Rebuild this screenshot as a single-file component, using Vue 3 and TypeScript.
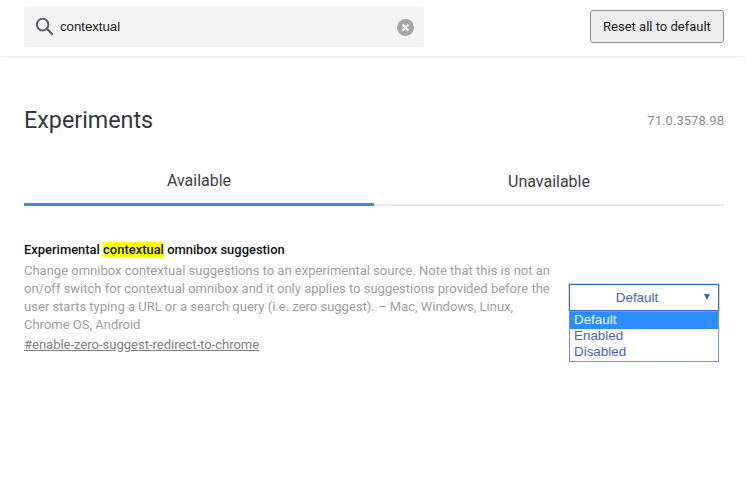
<script setup lang="ts">
const options: string[] = ['Default', 'Enabled', 'Disabled']
</script>

<template>
  <div class="page">
    <header class="top">
      <div class="search">
        <svg class="mag" width="20" height="20" viewBox="0 0 20 20" fill="none" stroke="#5f6368">
          <circle cx="7.6" cy="7.6" r="5.8" stroke-width="2" />
          <path d="M11.8 11.8 L17.8 17.8" stroke-width="2.2" />
        </svg>
        <span class="query">contextual</span>
        <svg class="clear" width="17" height="17" viewBox="0 0 17 17">
          <circle cx="8.5" cy="8.5" r="8.5" fill="#a6a6a6" />
          <path d="M5.5 5.5 L11.5 11.5 M11.5 5.5 L5.5 11.5" stroke="#f3f3f3" stroke-width="2.2" />
        </svg>
      </div>
      <button class="reset">Reset all to default</button>
    </header>

    <main class="body">
      <div class="title-row">
        <h1>Experiments</h1>
        <span class="version">71.0.3578.98</span>
      </div>

      <div class="tabs">
        <div class="tab active">Available</div>
        <div class="tab">Unavailable</div>
      </div>

      <section class="experiment">
        <div class="info">
          <h2>Experimental <mark>contextual</mark> omnibox suggestion</h2>
          <p>Change omnibox contextual suggestions to an experimental source. Note that this is not an on/off switch for contextual omnibox and it only applies to suggestions provided before the user starts typing a URL or a search query (i.e. zero suggest). – Mac, Windows, Linux, Chrome OS, Android</p>
          <a class="link">#enable-zero-suggest-redirect-to-chrome</a>
        </div>
        <div class="select-wrap">
          <div class="select">
            <span>Default</span>
            <i class="arrow"></i>
          </div>
          <ul class="menu">
            <li v-for="(o, i) in options" :key="o" :class="{ sel: i === 0 }">{{ o }}</li>
          </ul>
        </div>
      </section>
    </main>
  </div>
</template>

<style>
html, body { margin: 0; background: #fff; }
</style>

<style scoped>
.page {
  width: 745px;
  height: 481px;
  overflow: hidden;
  font-family: Roboto, "Liberation Sans", sans-serif;
  background: #fff;
}
.top {
  height: 57px;
  box-sizing: border-box;
  padding: 6px 21px 0 24px;
  display: flex;
  justify-content: space-between;
  align-items: flex-start;
  border-bottom: 1px solid #ededed;
  box-shadow: 0 1px 2px rgba(0, 0, 0, 0.05);
}
.search {
  width: 400px;
  height: 41px;
  box-sizing: border-box;
  background: #f4f4f4;
  border-radius: 3px;
  display: flex;
  align-items: center;
  padding: 0 10px 0 12px;
}
.mag { flex: none; margin-top: 1px; margin-left: -1px; }
.query {
  flex: 1;
  margin-left: 5px;
  font-family: "Liberation Sans", Arial, sans-serif;
  font-size: 13.2px;
  color: #202124;
}
.clear { flex: none; margin-top: 1px; }
.reset {
  width: 134px;
  height: 33px;
  margin-top: 4px;
  padding: 0;
  box-sizing: border-box;
  border: 1px solid #8f8f8f;
  border-radius: 3px;
  background: #eeeeee;
  font-family: Roboto, sans-serif;
  font-size: 13px;
  color: #202124;
}
.body {
  padding: 0 21px 0 24px;
}
.title-row {
  display: flex;
  justify-content: space-between;
  align-items: center;
  margin-top: 45px;
  height: 35px;
}
h1 {
  margin: 0;
  font-size: 23.3px;
  font-weight: 400;
  color: #33373b;
}
.version {
  font-size: 13px;
  color: #8a8d90;
  letter-spacing: 0.05px;
  margin-top: 1px;
}
.tabs {
  display: flex;
  margin-top: 25px;
  height: 42px;
  border-bottom: 2px solid #e9e9e9;
}
.tab {
  width: 350px;
  height: 44px;
  box-sizing: border-box;
  text-align: center;
  font-size: 16px;
  line-height: 38px;
  color: #3c4043;
}
.tab.active {
  border-bottom: 3px solid #4a86de;
}
.tab + .tab { flex: 1; height: 42px; line-height: 39px; }
.experiment {
  display: flex;
  margin-top: 34px;
}
.info { width: 530px; }
h2 {
  margin: 0;
  font-size: 12.95px;
  line-height: 19px;
  font-weight: 500;
  color: #111;
}
mark {
  background: #ffff00;
  color: inherit;
}
p {
  margin: 3px 0 0;
  font-size: 13px;
  line-height: 18px;
  color: #a0a0a0;
}
.link {
  display: block;
  margin-top: 2px;
  font-size: 13px;
  line-height: 18px;
  color: #7f7f7f;
  text-decoration: underline;
}
.select-wrap {
  width: 150px;
  margin-top: 44px;
  margin-left: 15px;
  font-family: "Liberation Sans", Arial, sans-serif;
  font-size: 13.4px;
  color: #4a63b4;
}
.select {
  position: relative;
  height: 27px;
  box-sizing: border-box;
  border: 1px solid #3b6cc9;
  box-shadow: 0 0 0 0.5px #8fb2ee;
  text-align: center;
  line-height: 25px;
  padding-right: 14px;
}
.arrow {
  position: absolute;
  right: 8px;
  top: 9px;
  width: 0;
  height: 0;
  border-left: 3px solid transparent;
  border-right: 3px solid transparent;
  border-top: 6px solid #3f5eb5;
}
.menu {
  list-style: none;
  margin: 0;
  padding: 0;
  border: 1px solid #7396cc;
  border-top: 0;
  box-sizing: border-box;
  height: 51px;
}
.menu li {
  height: 16px;
  line-height: 14px;
  padding-left: 4px;
}
.menu li.sel {
  height: 18px;
  line-height: 18px;
  background: #2b8dff;
  color: #f2f6ff;
}
</style>
